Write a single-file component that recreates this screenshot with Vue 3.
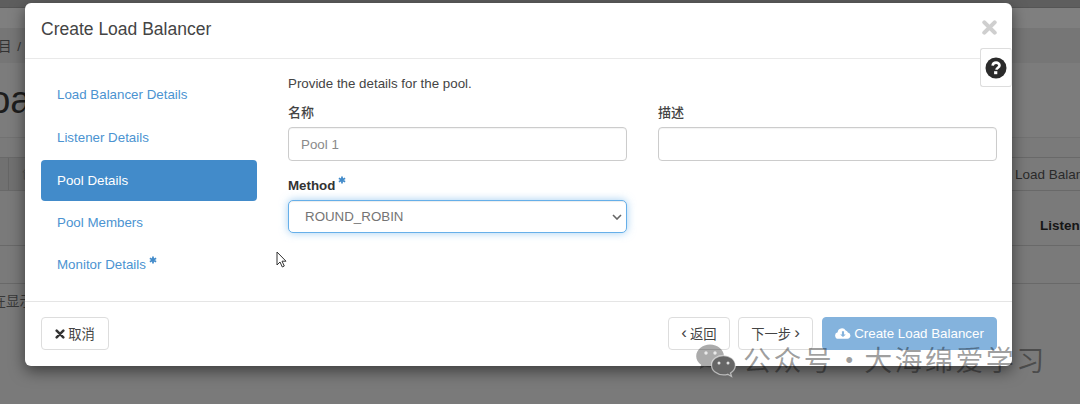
<script setup>
const navItems = [
  { label: 'Load Balancer Details' },
  { label: 'Listener Details' },
  { label: 'Pool Details', active: true },
  { label: 'Pool Members' },
  { label: 'Monitor Details', required: true }
]
</script>

<template>
  <div class="screen">
    <div class="page">
      <div class="topbar"></div>
      <div class="spacer"></div>
      <div class="crumb">目 /</div>
      <div class="title">Load Balancers</div>
      <div class="strip"></div>
      <div class="toolbar">
        <span class="cell"></span>
        <span class="cell wide">创</span>
        <span class="toolbar-right">Load Balan</span>
      </div>
      <div class="thead"><span>Listen</span></div>
      <div class="empty"></div>
      <div class="foot">正在显示</div>
    </div>

    <section class="modal">
      <header class="modal-head">
        <h4>Create Load Balancer</h4>
        <svg class="close" viewBox="0 0 16 16" width="15" height="15"><path d="M2.5 2.5l11 11M13.5 2.5l-11 11" stroke="#cfcfcf" stroke-width="4.4" stroke-linecap="round" fill="none"/></svg>
      </header>
      <button class="help" type="button" aria-label="help">
        <svg viewBox="0 0 22 22" width="22" height="22">
          <circle cx="11" cy="11" r="10.5" fill="#2b2b2b"/>
          <path d="M7.6 8.6c.3-2 1.700-3 3.500-3 2 0 3.400 1.200 3.400 2.800 0 2.300-3 2.300-3 4.300" fill="none" stroke="#fff" stroke-width="2.600"/>
          <rect x="9.100" y="14.200" width="3.200" height="3" fill="#fff"/>
        </svg>
      </button>
      <div class="modal-body">
        <nav class="steps">
          <a v-for="item in navItems" :key="item.label" class="step" :class="{ active: item.active }">
            {{ item.label }}
            <svg v-if="item.required" class="star" viewBox="0 0 10 10" width="8" height="8"><path d="M5 0.500v9M1.100 2.750l7.800 4.500M8.900 2.750l-7.800 4.500" stroke="#428bca" stroke-width="2.200"/></svg>
          </a>
        </nav>
        <div class="panel">
          <p class="intro">Provide the details for the pool.</p>
          <div class="grid">
            <label class="field">
              <span class="label">名称</span>
              <input class="control" placeholder="Pool 1" />
            </label>
            <label class="field">
              <span class="label">描述</span>
              <input class="control" />
            </label>
            <label class="field method">
              <span class="label bold">Method <svg class="star up" viewBox="0 0 10 10" width="8" height="8"><path d="M5 0.500v9M1.100 2.750l7.800 4.500M8.900 2.750l-7.800 4.500" stroke="#428bca" stroke-width="2.200"/></svg></span>
              <select class="control select"><option>ROUND_ROBIN</option></select>
            </label>
          </div>
        </div>
      </div>
      <footer class="modal-foot">
        <button class="btn cancel" type="button">
          <svg viewBox="0 0 12 12" width="10" height="10"><path d="M2 2l8 8M10 2l-8 8" stroke="#333" stroke-width="3" stroke-linecap="round"/></svg>
          取消
        </button>
        <div class="foot-right">
          <button class="btn back" type="button"><span class="angle">‹</span> 返回</button>
          <button class="btn next" type="button">下一步 <span class="angle">›</span></button>
          <button class="btn primary" type="button">
            <svg viewBox="0 0 18 14" width="16" height="13"><path d="M4 13a3.700 3.700 0 0 1-1-7.300A4.800 4.800 0 0 1 12 3.600a3.300 3.300 0 0 1 2.500 2.300A3.600 3.600 0 0 1 14 13z" fill="#fff"/><path d="M7.800 4.500h2.400v3.500h2L9 11 5.800 8h2z" fill="#84b3dd"/></svg>
            Create Load Balancer
          </button>
        </div>
      </footer>
    </section>

    <svg class="cursor" viewBox="0 0 12 18" width="12" height="18"><path d="M1 1v13l3-3 2.300 5 2-1-2.300-4.800H10z" fill="#fff" stroke="#333" stroke-width="1"/></svg>

    <div class="watermark">
      <svg viewBox="0 0 40 34" width="40" height="34">
        <path d="M14 0.500C6.300 0.500 .2 5.800 .2 12.200c0 3.500 1.900 6.500 4.900 8.600L3.900 25l4.700-2.500c1.700.5 3.400.8 5.400.8 7.600 0 14-5 14-11.100S21.600 0.500 14 0.500z" fill="rgba(0,0,0,.33)"/>
        <circle cx="10" cy="9" r="1.700" fill="rgba(255,255,255,.75)"/>
        <circle cx="19" cy="9" r="1.700" fill="rgba(255,255,255,.75)"/>
        <path d="M27.500 11.500c-6.600 0-12 4.300-12 9.700s5.400 9.700 12 9.700c1.500 0 2.900-.2 4.200-.6l3.800 2.200-1-3.500c3-1.800 4.900-4.600 4.900-7.800 0-5.400-5.300-9.700-11.900-9.700z" fill="#666" stroke="rgba(255,255,255,.55)" stroke-width="1.300"/>
        <circle cx="23" cy="19" r="1.500" fill="rgba(255,255,255,.8)"/>
        <circle cx="32" cy="19" r="1.500" fill="rgba(255,255,255,.8)"/>
      </svg>
      <span class="mark">公众号<span class="dot">·</span>大海绵爱学习</span>
    </div>
  </div>
</template>

<style>
html, body { margin: 0; overflow: hidden; }
</style>

<style scoped>
.screen {
  position: relative;
  width: 1080px;
  height: 404px;
  overflow: hidden;
  background: #7a7a7a;
  font-family: "Liberation Sans", "Noto Sans CJK SC", sans-serif;
  color: #333;
}
.page { display: flex; flex-direction: column; height: 100%; color: #222; font-size: 14px; }
.topbar { height: 7px; background: #5e5e5e; border-bottom: 1px solid #555; flex: none; }
.spacer { height: 20px; background: #7f7f7f; flex: none; }
.crumb { height: 35px; line-height: 37px; background: #767676; font-size: 13.500px; color: #333; flex: none; margin-left: -2px; word-spacing: 2px; }
.title { height: 74px; line-height: 74px; font-size: 38px; margin-left: -32px; white-space: nowrap; color: #1d1d1d; background: #7c7c7c; flex: none; }
.strip { height: 20px; border-top: 1px solid #727272; box-sizing: border-box; flex: none; }
.toolbar { height: 32px; display: flex; align-items: center; border-top: 1px solid #696969; border-bottom: 1px solid #696969; flex: none; }
.cell { width: 8px; height: 100%; background: #717171; border-right: 1px solid #666; }
.cell.wide { width: 30px; padding-left: 13px; color: #555; line-height: 32px; font-size: 13px; }
.toolbar-right { margin-left: auto; width: 65px; white-space: nowrap; font-size: 13.500px; color: #2a2a2a; }
.thead { height: 55px; border-bottom: 1px solid #696969; display: flex; justify-content: flex-end; align-items: center; flex: none; padding-top: 14px; box-sizing: border-box; }
.thead span { width: 40px; font-weight: 700; font-size: 13.500px; color: #151515; }
.empty { height: 37px; border-bottom: 1px solid #696969; flex: none; }
.foot { margin-left: -21px; height: 36px; line-height: 36px; font-size: 13.500px; color: #383838; white-space: nowrap; flex: none; }

.modal {
  position: absolute;
  left: 25px;
  top: 3px;
  width: 987px;
  height: 363px;
  background: #fff;
  border-radius: 6px;
  box-shadow: 0 5px 15px rgba(0, 0, 0, .5);
  display: flex;
  flex-direction: column;
}
.modal-head {
  height: 55px;
  flex: none;
  border-bottom: 1px solid #e9e9e9;
  padding: 0 16px;
  display: flex;
  align-items: center;
  justify-content: space-between;
}
.modal-head h4 { margin: 0 0 2px; font-size: 17.500px; font-weight: 400; color: #444; }
.close { margin: -7px -1px 0 0; }
.help {
  position: absolute;
  right: 0;
  top: 45px;
  width: 32px;
  height: 39px;
  box-sizing: border-box;
  padding: 0;
  background: #fff;
  border: 1px solid #ddd;
  border-right: 1px solid #eee;
  border-radius: 3px;
  display: flex;
  align-items: center;
  justify-content: center;
}
.modal-body {
  flex: 1;
  min-height: 0;
  display: flex;
  gap: 31px;
  padding: 14px 15px 0 16px;
}
.steps { width: 216px; flex: none; display: flex; flex-direction: column; }
.step {
  height: 42px;
  line-height: 44px;
  padding-left: 16px;
  font-size: 13.330px;
  color: #4b93d1;
  border-radius: 4px;
  box-sizing: border-box;
  flex: none;
}
.step:nth-child(2) { margin-top: 1px; }
.step.active { background: #428bca; color: #fff; height: 41px; line-height: 41px; margin-top: 2px; }
.star { vertical-align: 5px; margin-left: -1px; }
.panel { flex: 1; min-width: 0; }
.intro { margin: 2px 0 0; font-size: 13.330px; line-height: 18px; color: #444; }
.grid { display: grid; grid-template-columns: 339px 339px; column-gap: 31px; margin-top: 10px; }
.field { display: flex; flex-direction: column; }
.label { font-size: 13px; line-height: 20px; color: #444; font-weight: 500; margin-bottom: 4px; }
.label.bold { font-size: 13.330px; font-weight: 700; color: #333; margin-bottom: 4px; }
.up { vertical-align: 6px; }
.control {
  box-sizing: border-box;
  width: 100%;
  height: 34px;
  border: 1px solid #ccc;
  border-radius: 4px;
  padding: 0 12px;
  font: 13.330px "Liberation Sans", sans-serif;
  background: #fff;
  color: #555;
  box-shadow: inset 0 1px 1px rgba(0, 0, 0, .05);
  outline: none;
}
.control::placeholder { color: #8a8a8a; }
.method { grid-column: 1; margin-top: 15px; }
.select {
  height: 33px;
  padding-left: 16px;
  color: #747474;
  border-color: #66afe9;
  border-radius: 5px;
  appearance: none;
  background: #fff url("data:image/svg+xml,%3Csvg xmlns='http://www.w3.org/2000/svg' width='10' height='6'%3E%3Cpath d='M1 1l4 4 4-4' fill='none' stroke='%23666' stroke-width='1.600'/%3E%3C/svg%3E") no-repeat right 4px center;
  box-shadow: inset 0 1px 1px rgba(0, 0, 0, .075), 0 0 8px rgba(102, 175, 233, .6);
}
.modal-foot {
  height: 65px;
  flex: none;
  box-sizing: border-box;
  border-top: 1px solid #e5e5e5;
  padding: 15px 15px 0 16px;
  display: flex;
  justify-content: space-between;
  align-items: flex-start;
}
.foot-right { display: flex; gap: 8px; margin-left: auto; }
.btn {
  height: 33px;
  box-sizing: border-box;
  border: 1px solid #ddd;
  border-radius: 4px;
  background: #fff;
  color: #444;
  font: 13.330px "Liberation Sans", "Noto Sans CJK SC", sans-serif;
  padding: 0;
  display: inline-flex;
  align-items: center;
  justify-content: center;
  gap: 3px;
}
.angle { font-size: 17px; line-height: 1; margin-top: -3px; }
.cancel { width: 68px; }
.back { width: 62px; }
.next { width: 75px; margin-right: 1px; }
.primary { width: 175px; background: #84b3dd; border-color: #84b3dd; color: #fff; }

.cursor { position: absolute; left: 276px; top: 251px; }
.watermark {
  position: absolute;
  left: 696px;
  top: 344px;
  display: flex;
  align-items: center;
  gap: 7px;
  pointer-events: none;
}
.mark {
  font-family: "Noto Sans CJK SC", sans-serif;
  font-size: 28px;
  line-height: 34px;
  letter-spacing: 2.400px;
  color: rgba(0, 0, 0, .38);
  white-space: nowrap;
  margin-top: -4px;
}
.dot { display: inline-block; width: 30px; text-align: center; letter-spacing: 0; }
</style>
